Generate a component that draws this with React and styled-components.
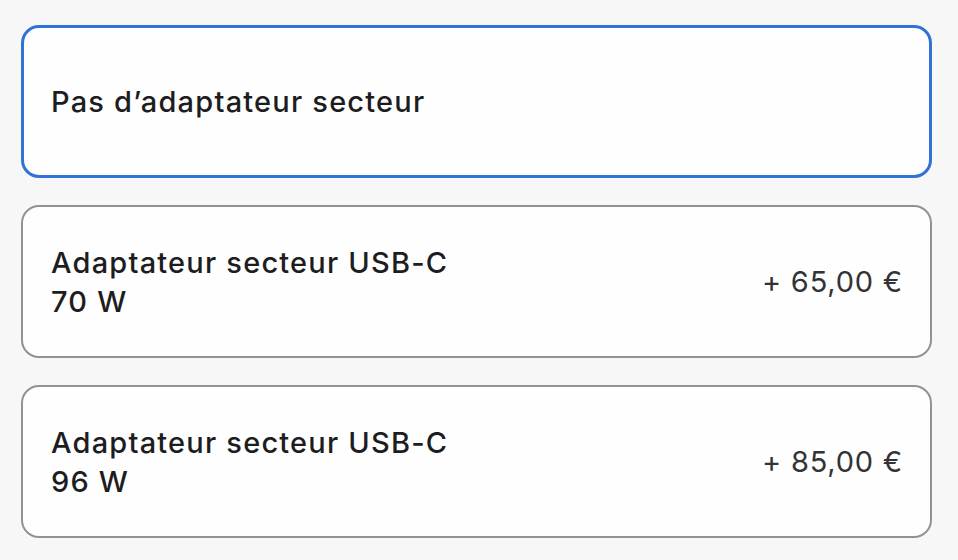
import React from 'react';
import styled, { createGlobalStyle } from 'styled-components';

const Global = createGlobalStyle`
	body {
		margin: 0;
		background: #f7f7f7;
		font-family: Inter, 'Liberation Sans', sans-serif;
	}
`;

const List = styled.div`
	display: flex;
	flex-direction: column;
	gap: 27px;
	padding: 25px 26px 0 21px;
`;

const Option = styled.div`
	height: 153px;
	box-sizing: border-box;
	display: flex;
	align-items: center;
	justify-content: space-between;
	padding: 0 27px 0 ${p => (p.selected ? 27 : 28)}px;
	background: #fefefe;
	border-radius: 18px;
	border: ${p => (p.selected ? '3px solid #3172d9' : '2px solid #929292')};
`;

const Title = styled.div`
	font-size: 29px;
	font-weight: 500;
	line-height: 39px;
	color: #1d1d1f;
	letter-spacing: 1.2px;
`;

const Price = styled.div`
	font-size: 29px;
	font-weight: 400;
	color: #333336;
	letter-spacing: 0.8px;
`;

const options = [
	{ title: ['Pas d’adaptateur secteur'], selected: true },
	{ title: ['Adaptateur secteur USB-C', '70 W'], price: '+ 65,00 €' },
	{ title: ['Adaptateur secteur USB-C', '96 W'], price: '+ 85,00 €' },
];

const App = () => (
	<>
		<Global />
		<List>
			{options.map((o, i) => (
				<Option key={i} selected={o.selected}>
					<Title>
						{o.title.map((line, j) => <div key={j}>{line}</div>)}
					</Title>
					{o.price && <Price>{o.price}</Price>}
				</Option>
			))}
		</List>
	</>
);

export default App;
